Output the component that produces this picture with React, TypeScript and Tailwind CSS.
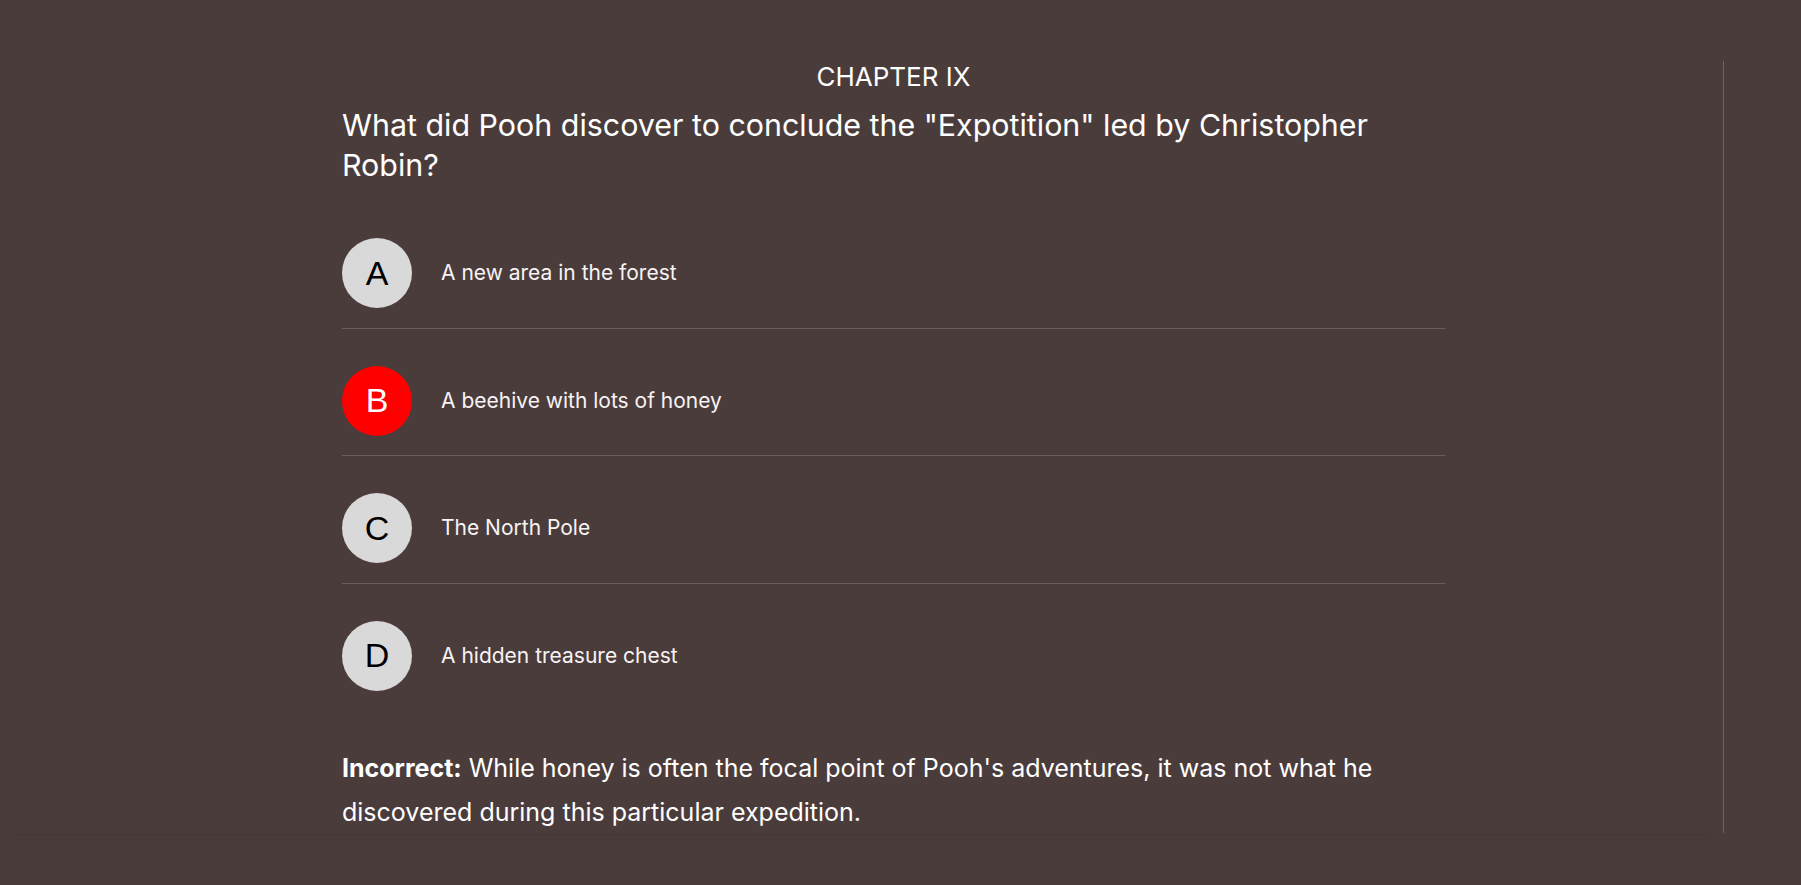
const options = [
  { letter: 'A', text: 'A new area in the forest' },
  { letter: 'B', text: 'A beehive with lots of honey', wrong: true },
  { letter: 'C', text: 'The North Pole' },
  { letter: 'D', text: 'A hidden treasure chest' },
]

export default function App() {
  return (
    <div className="min-h-screen bg-[#4b3c3c] pt-[61px] font-['Inter',sans-serif] text-white">
      <div className="w-[1724px] h-[772px] border-r border-[#6e6464] shadow-[0_6px_10px_-8px_rgba(0,0,0,0.15)]">
        <div className="ml-[342px] w-[1103px]">
          <div className="text-center text-[26px] leading-[32px]">CHAPTER IX</div>
          <h1 className="mt-[12px] text-[30.4px] leading-[40px] font-normal">
            What did Pooh discover to conclude the "Expotition" led by Christopher Robin?
          </h1>
          <ul className="mt-[16px]">
            {options.map((o, i) => (
              <li
                key={o.letter}
                className={`flex items-center pt-[37px] pb-[19.5px] ${i < options.length - 1 ? 'border-b border-[#6a5d5d]' : ''}`}
              >
                <div
                  className={`flex h-[70px] w-[70px] shrink-0 items-center justify-center rounded-full font-['Liberation_Sans',sans-serif] text-[34px] ${o.wrong ? 'bg-[#ff0000] text-white' : 'bg-[#d9d9d9] text-black'}`}
                >
                  {o.letter}
                </div>
                <span className="ml-[29px] text-[21px] text-[#f7f3f3]">{o.text}</span>
              </li>
            ))}
          </ul>
          <p className="mt-[36px] text-[25px] leading-[44px]">
            <span className="font-bold">Incorrect:</span> While honey is often the focal point of Pooh's adventures, it was not what he discovered during this particular expedition.
          </p>
        </div>
      </div>
    </div>
  )
}
